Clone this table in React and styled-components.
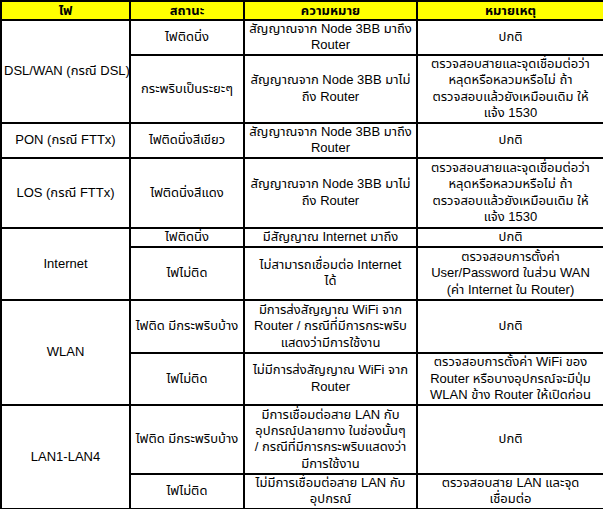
import styled, { createGlobalStyle } from 'styled-components'

const GlobalStyle = createGlobalStyle`
  html, body {
    margin: 0;
    padding: 0;
    background: #fff;
  }
  body {
    font-family: Tahoma, "Liberation Sans", "Noto Sans Thai", "Noto Sans", sans-serif;
    font-size: 13px;
    color: #000;
  }
`

const Table = styled.table`
  width: 603px;
  table-layout: fixed;
  border-collapse: collapse;
  border: 2px solid #000;
`

const HeadCell = styled.th`
  background-color: #ffff00;
  border: 2px solid #000;
  height: 17px;
  padding: 0;
  font-weight: bold;
  line-height: 17px;
  text-align: center;
`

const Cell = styled.td`
  border: 2px solid #000;
  padding: 0 2px;
  line-height: 16.4px;
  text-align: center;
  vertical-align: middle;
  height: ${({ h }) => (h ? `${h}px` : 'auto')};
  white-space: nowrap;
`

const rows = [
  {
    light: 'DSL/WAN (กรณี DSL)',
    span: 2,
    items: [
      {
        h: 31,
        state: ['ไฟติดนิ่ง'],
        meaning: ['สัญญาณจาก Node 3BB มาถึง', 'Router'],
        note: ['ปกติ'],
      },
      {
        h: 66,
        state: ['กระพริบเป็นระยะๆ'],
        meaning: ['สัญญาณจาก Node 3BB มาไม่', 'ถึง Router'],
        note: [
          'ตรวจสอบสายและจุดเชื่อมต่อว่า',
          'หลุดหรือหลวมหรือไม่ ถ้า',
          'ตรวจสอบแล้วยังเหมือนเดิม ให้',
          'แจ้ง 1530',
        ],
      },
    ],
  },
  {
    light: 'PON (กรณี FTTx)',
    span: 1,
    items: [
      {
        h: 33,
        state: ['ไฟติดนิ่งสีเขียว'],
        meaning: ['สัญญาณจาก Node 3BB มาถึง', 'Router'],
        note: ['ปกติ'],
      },
    ],
  },
  {
    light: 'LOS (กรณี FTTx)',
    span: 1,
    items: [
      {
        h: 68,
        state: ['ไฟติดนิ่งสีแดง'],
        meaning: ['สัญญาณจาก Node 3BB มาไม่', 'ถึง Router'],
        note: [
          'ตรวจสอบสายและจุดเชื่อมต่อว่า',
          'หลุดหรือหลวมหรือไม่ ถ้า',
          'ตรวจสอบแล้วยังเหมือนเดิม ให้',
          'แจ้ง 1530',
        ],
      },
    ],
  },
  {
    light: 'Internet',
    span: 2,
    items: [
      {
        h: 17,
        state: ['ไฟติดนิ่ง'],
        meaning: ['มีสัญญาณ Internet มาถึง'],
        note: ['ปกติ'],
      },
      {
        h: 51,
        state: ['ไฟไม่ติด'],
        meaning: ['ไม่สามารถเชื่อมต่อ Internet', 'ได้'],
        note: [
          'ตรวจสอบการตั้งค่า',
          'User/Password ในส่วน WAN',
          '(ค่า Internet ใน Router)',
        ],
      },
    ],
  },
  {
    light: 'WLAN',
    span: 2,
    items: [
      {
        h: 51,
        state: ['ไฟติด มีกระพริบบ้าง'],
        meaning: [
          'มีการส่งสัญญาณ WiFi จาก',
          'Router / กรณีที่มีการกระพริบ',
          'แสดงว่ามีการใช้งาน',
        ],
        note: ['ปกติ'],
      },
      {
        h: 50,
        state: ['ไฟไม่ติด'],
        meaning: ['ไม่มีการส่งสัญญาณ WiFi จาก', 'Router'],
        note: [
          'ตรวจสอบการตั้งค่า WiFi ของ',
          'Router หรือบางอุปกรณ์จะมีปุ่ม',
          'WLAN ข้าง Router ให้เปิดก่อน',
        ],
      },
    ],
  },
  {
    light: 'LAN1-LAN4',
    span: 2,
    items: [
      {
        h: 67,
        state: ['ไฟติด มีกระพริบบ้าง'],
        meaning: [
          'มีการเชื่อมต่อสาย LAN กับ',
          'อุปกรณ์ปลายทาง ในช่องนั้นๆ',
          '/ กรณีที่มีการกระพริบแสดงว่า',
          'มีการใช้งาน',
        ],
        note: ['ปกติ'],
      },
      {
        h: 31,
        state: ['ไฟไม่ติด'],
        meaning: ['ไม่มีการเชื่อมต่อสาย LAN กับ', 'อุปกรณ์'],
        note: ['ตรวจสอบสาย LAN และจุด', 'เชื่อมต่อ'],
      },
    ],
  },
]

const Lines = ({ lines }) =>
  lines.map((line, i) => (
    <span key={i}>
      {i > 0 && <br />}
      {line}
    </span>
  ))

const App = () => {
  return (
    <>
      <GlobalStyle />
      <Table>
        <colgroup>
          <col style={{ width: 129 }} />
          <col style={{ width: 114 }} />
          <col style={{ width: 173 }} />
          <col style={{ width: 187 }} />
        </colgroup>
        <thead>
          <tr>
            <HeadCell>ไฟ</HeadCell>
            <HeadCell>สถานะ</HeadCell>
            <HeadCell>ความหมาย</HeadCell>
            <HeadCell>หมายเหตุ</HeadCell>
          </tr>
        </thead>
        <tbody>
          {rows.map((group) =>
            group.items.map((item, i) => (
              <tr key={group.light + i}>
                {i === 0 && <Cell rowSpan={group.span}>{group.light}</Cell>}
                <Cell h={item.h}>
                  <Lines lines={item.state} />
                </Cell>
                <Cell>
                  <Lines lines={item.meaning} />
                </Cell>
                <Cell>
                  <Lines lines={item.note} />
                </Cell>
              </tr>
            ))
          )}
        </tbody>
      </Table>
    </>
  )
}

export default App
